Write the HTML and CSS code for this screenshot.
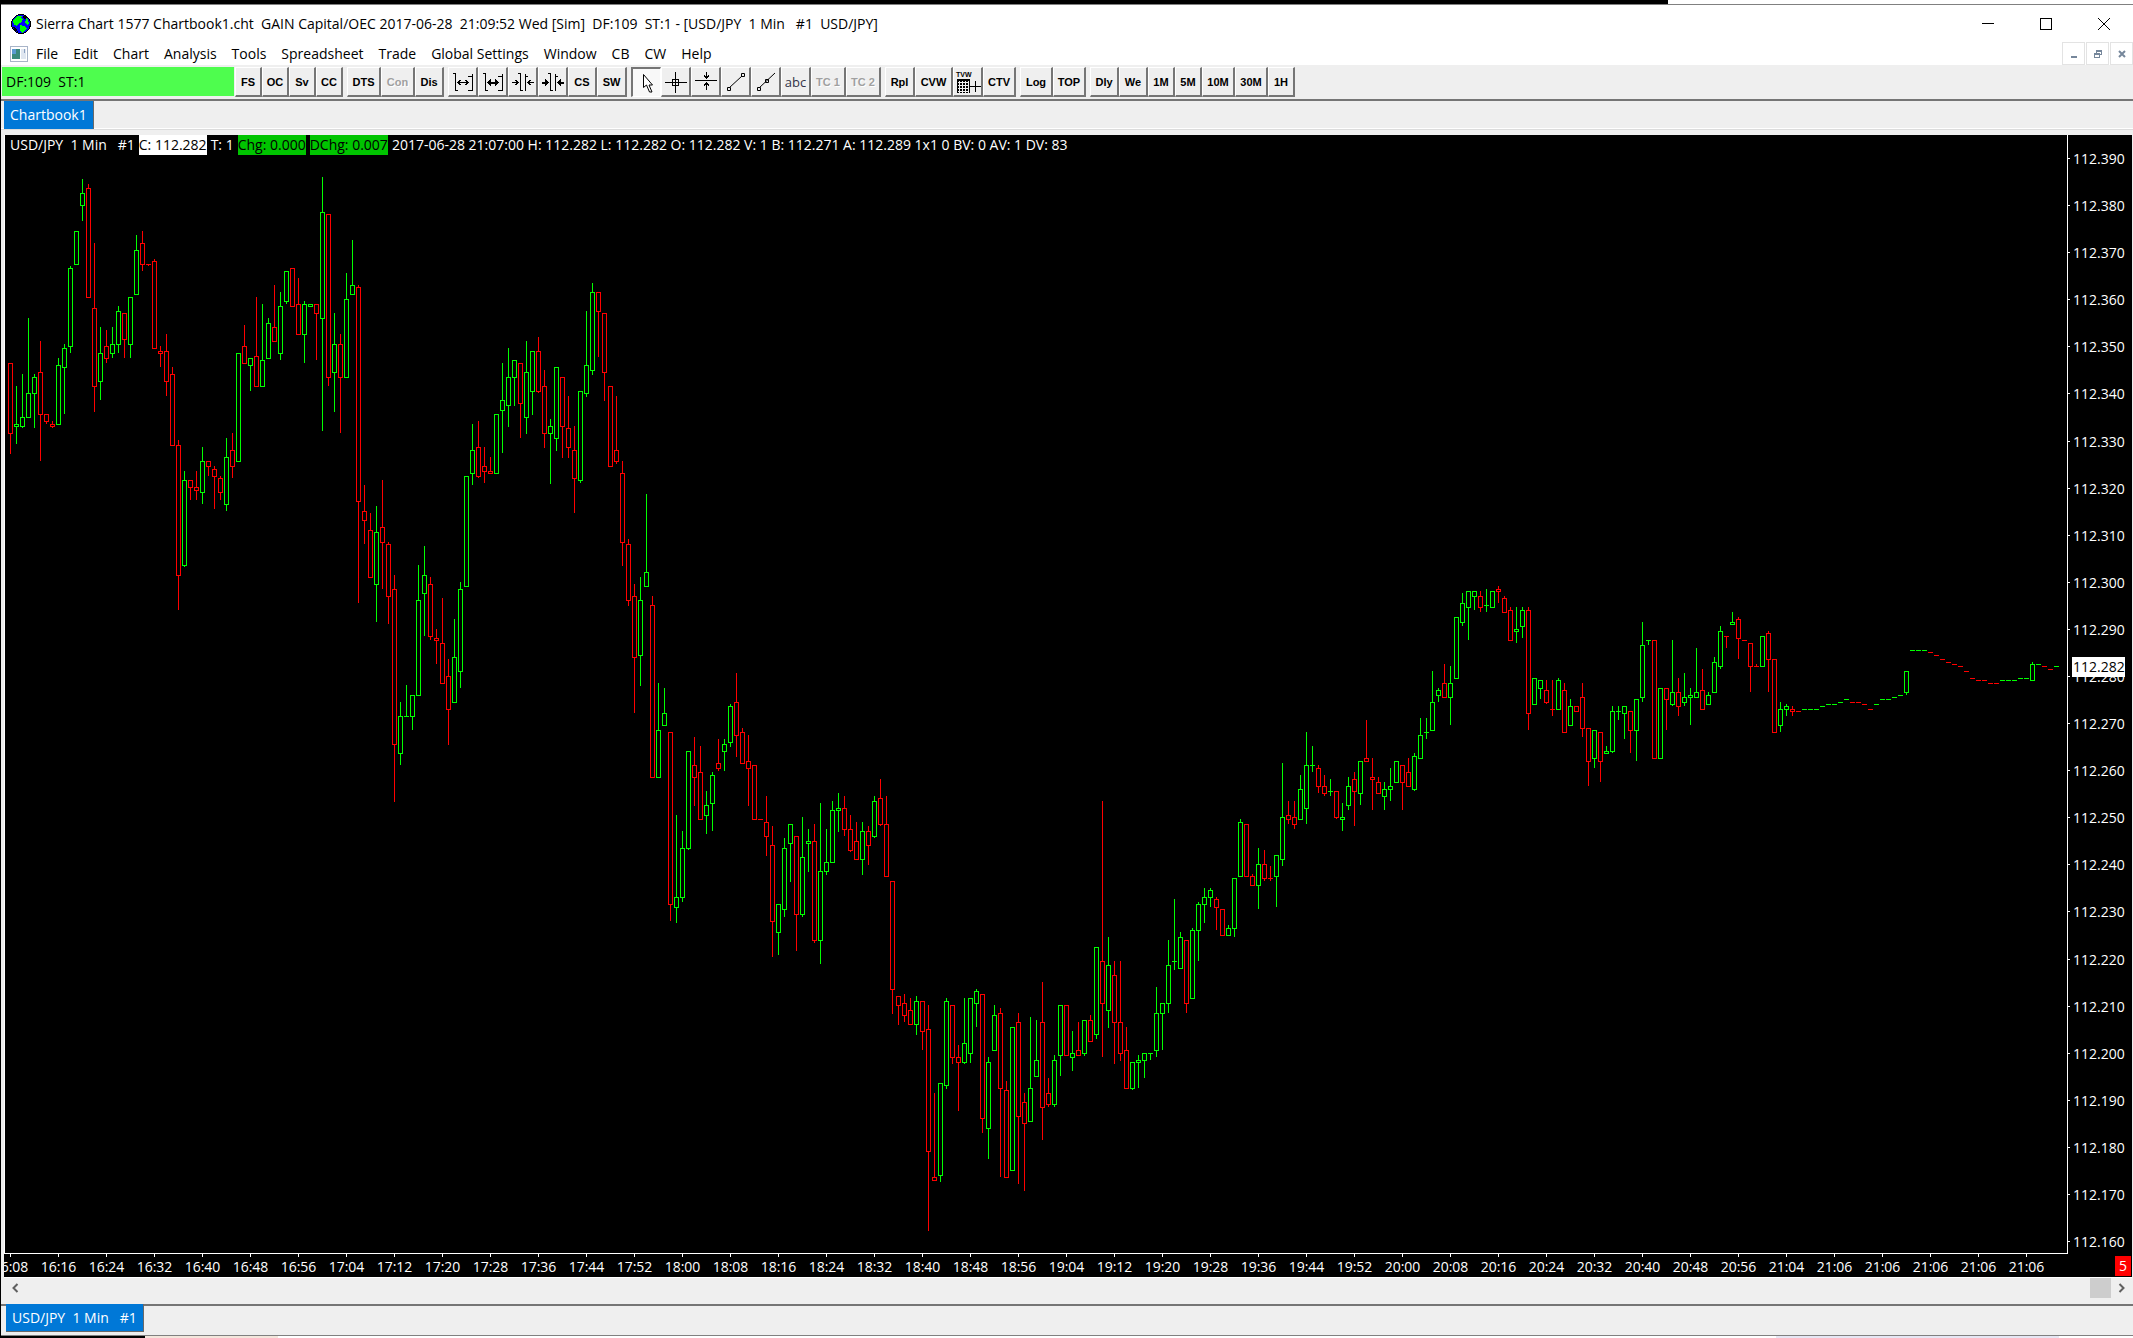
FILE: index.html
```html
<!DOCTYPE html>
<html lang="en">
<head>
    <meta charset="UTF-8">
    <meta name="viewport" content="width=device-width, initial-scale=1.0">
    <title>Sierra Chart 1577 Chartbook1.cht</title>
    <link rel="stylesheet" href="styles.css">
</head>
<body>

    <div class="desktop-top"></div>

    <div class="window">
        <!-- Title bar -->
        <header class="titlebar">
            <svg class="globe" viewBox="0 0 20 20">
                <circle cx="10" cy="10" r="9.5" fill="#00f" stroke="#000"/>
                <path fill="#0f0" d="M4 4l3-2h4l-1 2 2 1-1 3-3 1-2 3-3-1-1-4zM14 3l3 3 1 4-2 1-2-3 1-2zM9 11l4 1 3 2-2 3-3 2-2-3z"/>
                <path fill="#000" d="M2 13l3 1 2 4-3-1zM12 2h3l1 2-3 1z"/>
            </svg>
            <h1>Sierra Chart 1577 Chartbook1.cht&nbsp; GAIN Capital/OEC 2017-06-28&nbsp; 21:09:52 Wed [Sim]&nbsp; DF:109&nbsp; ST:1 - [USD/JPY&nbsp; 1 Min&nbsp;&nbsp; #1&nbsp; USD/JPY]</h1>
            <div class="window-buttons">
                <button type="button" aria-label="Minimize"><svg viewBox="0 0 12 12"><path d="M0 5.5h12"/></svg></button>
                <button type="button" aria-label="Maximize"><svg viewBox="0 0 12 12"><path d="M.5 .5h11v11h-11z"/></svg></button>
                <button type="button" aria-label="Close"><svg class="smooth" viewBox="0 0 12 12"><path d="M0 0l12 12M12 0L0 12"/></svg></button>
            </div>
        </header>

        <!-- Menu -->
        <nav class="menubar">
            <svg class="doc-icon" viewBox="0 0 18 16">
                <path fill="#fff" stroke="#a8b4c8" d="M.5 .5h17v15h-17z"/>
                <path fill="#3a8a7c" d="M2 3h8v10H2z"/>
                <path fill="#5b9bd0" d="M2 3h4v5H2z"/>
                <path fill="#dfe6f0" d="M11 3h5v10h-5z"/>
                <path fill="#8aa0c0" d="M14 3h1v4h-1z"/>
            </svg>
            <button type="button">File</button>
            <button type="button">Edit</button>
            <button type="button">Chart</button>
            <button type="button">Analysis</button>
            <button type="button">Tools</button>
            <button type="button">Spreadsheet</button>
            <button type="button">Trade</button>
            <button type="button">Global Settings</button>
            <button type="button">Window</button>
            <button type="button">CB</button>
            <button type="button">CW</button>
            <button type="button">Help</button>
            <div class="mdi-buttons">
                <button type="button" aria-label="Minimize chart"><svg viewBox="0 0 10 10"><path d="M2 8h6"/></svg></button>
                <button type="button" aria-label="Restore chart"><svg class="thin" viewBox="0 0 10 10"><path d="M3.5 4V1.500h5v4H7M3 2h6M1.500 4.500h5v4h-5zM1 5h6"/></svg></button>
                <button type="button" aria-label="Close chart"><svg class="smooth" viewBox="0 0 10 10"><path d="M2 2l6 6M8 2l-6 6"/></svg></button>
            </div>
        </nav>

        <!-- Toolbar -->
        <div class="toolbar">
            <div class="status">DF:109&nbsp; ST:1</div>
            <div class="group">
                <button type="button">FS</button>
                <button type="button">OC</button>
                <button type="button">Sv</button>
                <button type="button">CC</button>
            </div>
            <div class="group">
                <button type="button" class="w34">DTS</button>
                <button type="button" class="w34" disabled>Con</button>
                <button type="button" class="w29">Dis</button>
            </div>
            <div class="group">
                <button type="button" class="w30" aria-label="Widen spacing"><svg viewBox="0 0 22 22"><path d="M1 2.500h2.500v17H6M20.500 20V3M16 5.500h4.500M16 19.500h4.500M6 11.500h10M8.500 9l-2.500 2.500 2.500 2.500M13.500 9l2.500 2.500-2.500 2.500"/></svg></button>
                <button type="button" class="w30" aria-label="Widen bars"><svg viewBox="0 0 22 22"><path d="M1 2.500h2.500v17H6M20.500 20V3M16 5.500h4.500M16 19.500h4.500"/><path class="bold" d="M6 11.500h10"/><path class="fill" d="M5 11.500l4-4v8zM17 11.500l-4-4v8z"/></svg></button>
                <button type="button" class="w30" aria-label="Narrow spacing"><svg viewBox="0 0 22 22"><path d="M8.500 2v17H11M13.500 20V3M6 2.500h2.500M13.500 5.500H16M0 11.500h6M3.500 9l2.500 2.500-2.500 2.500M16 11.500h6M18.500 9l-2.500 2.500 2.500 2.500"/></svg></button>
                <button type="button" class="w30" aria-label="Narrow bars"><svg viewBox="0 0 22 22"><path d="M8.500 2v17H11M13.500 20V3M6 2.500h2.500M13.500 5.500H16"/><path class="bold" d="M0 11.500h4M18 11.500h4"/><path class="fill" d="M7 11.500l-4-4v8zM15 11.500l4-4v8z"/></svg></button>
                <button type="button" class="w29">CS</button>
                <button type="button" class="w30">SW</button>
            </div>
            <div class="group">
                <button type="button" class="w30 pressed" aria-label="Pointer"><svg class="smooth" viewBox="0 0 22 22"><path fill="#fff" d="M7.500 2.500v13l3-2.500 3 7h2.500l-3-7h3.500z"/></svg></button>
                <button type="button" class="w30" aria-label="Crosshair"><svg viewBox="0 0 22 22"><path d="M0 11.500h22M10.500 1v21M7.500 8.500h6v6h-6z"/></svg></button>
                <button type="button" class="w30" aria-label="Horizontal line"><svg viewBox="0 0 22 22"><path d="M0 9.500h22M11.500 1v6M9 4.500l2.500 2.500 2.500-2.500M11.500 12v7M9 14.500l2.500-2.500 2.500 2.500"/></svg></button>
                <button type="button" class="w30" aria-label="Trend line"><svg class="smooth" viewBox="0 0 22 22"><path d="M4 17L17 5M2.500 16.500h3v3h-3zM16.500 2.500h3v3h-3z"/></svg></button>
                <button type="button" class="w30" aria-label="Ray"><svg class="smooth" viewBox="0 0 22 22"><path d="M4 17L20 2M2.500 16.500h3v3h-3zM10.500 8.500h3v3h-3z"/></svg></button>
                <button type="button" class="w30 text-tool">abc</button>
                <button type="button" class="w35" disabled>TC 1</button>
                <button type="button" class="w35" disabled>TC 2</button>
            </div>
            <div class="group">
                <button type="button" class="w30">Rpl</button>
                <button type="button" class="w38">CVW</button>
                <button type="button" class="w30" aria-label="Trade window"><svg class="wide" viewBox="0 0 26 24"><path class="fill" d="M2 9h13v14H2z"/><path class="grid" d="M3 12.500h11M3 15.500h11M3 18.500h11M3 21.500h11M4.500 11v12M7.500 11v12M10.500 11v12M13.500 11v12"/><path d="M15 16.500h11M20.500 11v11"/><text x="1" y="7">TVW</text></svg></button>
                <button type="button" class="w33">CTV</button>
            </div>
            <div class="group">
                <button type="button" class="w33">Log</button>
                <button type="button" class="w33">TOP</button>
            </div>
            <div class="group">
                <button type="button" class="w29">Dly</button>
                <button type="button" class="w29">We</button>
                <button type="button">1M</button>
                <button type="button">5M</button>
                <button type="button" class="w33">10M</button>
                <button type="button" class="w33">30M</button>
                <button type="button">1H</button>
            </div>
        </div>

        <div class="book-tabs">
            <button type="button" class="tab">Chartbook1</button>
        </div>

        <!-- Chart -->
        <main class="chart">
            <div class="plot">
                <svg id="plot"></svg>
                <p class="readout">
                    <span>USD/JPY&nbsp; 1 Min&nbsp;&nbsp; #1</span>
                    <span class="last">C: 112.282</span>
                    <span>T: 1</span>
                    <span class="chg">Chg: 0.000</span>
                    <span class="chg">DChg: 0.007</span>
                    <span>2017-06-28 21:07:00 H: 112.282 L: 112.282 O: 112.282 V: 1 B: 112.271 A: 112.289 1x1 0 BV: 0 AV: 1 DV: 83</span>
                </p>
            </div>
            <svg id="prices"></svg>
            <svg id="times"></svg>
            <div class="corner"><span>5</span></div>
        </main>

        <div class="scrollbar">
            <button type="button" aria-label="Scroll left"><svg viewBox="0 0 8 10"><path d="M6.500 1l-4 4 4 4"/></svg></button>
            <div class="thumb"></div>
            <button type="button" aria-label="Scroll right"><svg viewBox="0 0 8 10"><path d="M1.500 1l4 4-4 4"/></svg></button>
        </div>

        <div class="chart-tabs">
            <button type="button" class="tab">USD/JPY&nbsp; 1 Min&nbsp;&nbsp; #1</button>
        </div>
    </div>

    <div class="desktop-bottom"><span class="cream"></span><span class="white"></span><span class="lilac"></span></div>

    <script src="chart.js"></script>
</body>
</html>
```
FILE: styles.css
```css
* {
    box-sizing: border-box;
}
body {
    margin: 0;
    height: 100vh;
    display: flex;
    flex-direction: column;
    background: #000;
    color: #000;
    font-family: "Open Sans", "Noto Sans", sans-serif;
    font-size: 14px;
    line-height: 20px;
    overflow: hidden;
}
button {
    font: inherit;
    color: inherit;
    border: none;
    background: none;
    padding: 0;
    white-space: nowrap;
}
svg {
    display: block;
    shape-rendering: crispEdges;
}
svg.smooth {
    shape-rendering: auto;
}
.desktop-top {
    height: 4px;
    flex: none;
    background: linear-gradient(to right, #000 78.2%, #fff 78.2%);
}
.window {
    flex: 1;
    min-height: 0;
    display: flex;
    flex-direction: column;
    margin-left: 1px;
    border-top: 1px solid #808080;
    border-bottom: 1px solid #808080;
    background: #efefef;
}

/* title bar */
.titlebar {
    display: flex;
    align-items: center;
    height: 37px;
    padding-left: 10px;
    background: #fff;
}
.globe {
    width: 20px;
    height: 20px;
}
.titlebar h1 {
    flex: 1;
    margin: 0 0 0 5px;
    font-size: 14px;
    font-weight: 400;
    white-space: nowrap;
}
.window-buttons {
    display: flex;
}
.window-buttons button {
    width: 58px;
    height: 36px;
    display: flex;
    align-items: center;
    justify-content: center;
}
.window-buttons svg {
    width: 12px;
    height: 12px;
    fill: none;
    stroke: #000;
}

/* menu */
.menubar {
    display: flex;
    align-items: center;
    gap: 15px;
    height: 23px;
    padding-left: 9px;
    background: #fff;
}
.doc-icon {
    width: 18px;
    height: 16px;
    margin-right: -7px;
}
.mdi-buttons {
    display: flex;
    gap: 1px;
    margin-left: auto;
}
.mdi-buttons button {
    width: 23px;
    height: 23px;
    display: flex;
    align-items: center;
    justify-content: center;
    border: 1px solid #e3e3e3;
}
.mdi-buttons svg {
    width: 10px;
    height: 10px;
    fill: none;
    stroke: #76879b;
    stroke-width: 2px;
}
.mdi-buttons .thin {
    stroke-width: 1px;
}

/* toolbar */
.toolbar {
    display: flex;
    gap: 4px;
    height: 34px;
    padding: 2px 0;
    padding-left: 1px;
}
.status {
    width: 232px;
    margin-right: -3px;
    padding: 5px 4px;
    background: #4efd4e;
    height: 29px;
}
.group {
    display: flex;
}
.group button {
    width: 27px;
    height: 30px;
    display: flex;
    align-items: center;
    justify-content: center;
    font: bold 11px "Liberation Sans", Arial, sans-serif;
    background: #efefef;
    border: 1px solid #fff;
    border-right: 2px solid #757575;
    border-bottom: 2px solid #757575;
}
.group .w29 {
    width: 29px;
}
.group .w30 {
    width: 30px;
}
.group .w33 {
    width: 33px;
}
.group .w34 {
    width: 34px;
}
.group .w35 {
    width: 35px;
}
.group .w38 {
    width: 38px;
}
.group button:disabled {
    color: #a0a0a0;
    text-shadow: 1px 1px #fff;
}
.group .text-tool {
    font: 13px "Open Sans", sans-serif;
    color: #333348;
}
.group .pressed {
    background: #f8f8f8;
    border: 1px solid #fff;
    border-top: 2px solid #757575;
    border-left: 2px solid #757575;
}
.group svg {
    width: 22px;
    height: 22px;
    fill: none;
    stroke: #000;
}
.group svg.wide {
    width: 26px;
    height: 24px;
}
.group .fill {
    fill: #000;
    stroke: none;
}
.group .bold {
    stroke-width: 2px;
}
.group .grid {
    stroke: #efefef;
}
.group text {
    fill: #000;
    stroke: none;
    font: bold 7px "Liberation Sans", sans-serif;
}

/* tabs */
.book-tabs {
    height: 36px;
    padding-left: 3px;
    border-top: 2px solid #757575;
    background: linear-gradient(#efefef 27px, #fff 27px, #fff 28px, #dcdcdc 28px, #dcdcdc 29px, #efefef 29px);
}
.tab {
    display: block;
    height: 28px;
    padding: 0 6px;
    background: #0078d7;
    color: #fff;
    border-right: 1px solid #696969;
}
.chart-tabs {
    height: 31px;
    padding-left: 5px;
    border-top: 2px solid #757575;
}
.chart-tabs .tab {
    margin-top: -2px;
    border-bottom: 1px solid #696969;
}

/* chart */
.chart {
    flex: 1;
    min-height: 0;
    display: grid;
    grid-template-columns: 1fr 64px;
    grid-template-rows: 1fr 23px;
    margin-left: 3px;
    margin-right: 1px;
    background: #000;
    color: #fff;
}
.plot {
    position: relative;
    min-height: 0;
    border: 1px solid #fff;
    border-top: none;
}
.chart svg {
    width: 100%;
    height: 100%;
    fill: #fff;
    stroke: none;
}
.plot svg {
    position: absolute;
    top: 0;
    left: 0;
}
.chart .axis {
    fill: none;
    stroke: #fff;
}
.chart .up {
    fill: none;
    stroke: #0f0;
}
.chart .down {
    fill: none;
    stroke: #f00;
}
.chart .tag {
    fill: #000;
}
#times text {
    text-anchor: middle;
}
.readout {
    position: absolute;
    top: 0;
    left: 0;
    display: flex;
    gap: 4px;
    margin: 0;
    padding-left: 5px;
    white-space: nowrap;
}
.readout .last {
    background: #fff;
    color: #000;
}
.readout .chg {
    background: #00c400;
    color: #000;
}
.corner {
    display: flex;
    justify-content: flex-end;
    padding: 2px 1px 1px;
}
.corner span {
    width: 16px;
    text-align: center;
    background: #f00;
}

/* scrollbar */
.scrollbar {
    display: flex;
    height: 27px;
    padding-bottom: 6px;
    margin-left: 3px;
    margin-right: 1px;
    border-top: 1px solid #fff;
}
.scrollbar button {
    width: 21px;
    display: flex;
    align-items: center;
    justify-content: center;
}
.scrollbar svg {
    width: 8px;
    height: 10px;
    fill: none;
    stroke: #606060;
    stroke-width: 2px;
    shape-rendering: auto;
}
.thumb {
    width: 21px;
    margin-left: auto;
    background: #cdcdcd;
}

.desktop-bottom {
    display: flex;
    height: 2px;
    flex: none;
    margin-left: 145px;
    padding-right: 74px;
    background: #fff;
}
.desktop-bottom .cream {
    width: 133px;
    background: #f3e6dc;
}
.desktop-bottom .white {
    flex: 1;
}
.desktop-bottom .lilac {
    width: 283px;
    background: #e6e6f3;
}
```
FILE: chart.js
```js
// One bar each: direction (U/D), then high, body top, body bottom, low
// measured down from the top of a plot BASE units tall.
const BASE = 1118;
const bars = `
D228,228,298,318 U251,289,291,308 U239,282,291,292 U183,258,282,282 U239,242,258,292 D206,237,279,325
D279,279,286,288 D286,289,291,292 U223,230,289,289 U209,213,232,278 U131,133,211,217 U96,96,129,129
U44,58,70,85 D49,53,162,162 D108,173,251,276 U192,218,246,264 D195,211,223,227 U192,209,218,222
U171,176,209,217 D178,178,204,222 U162,162,209,222 U100,115,159,159 D96,108,129,135 D129,129,129,130
D124,126,213,213 D211,216,218,231 D199,216,246,260 D232,239,310,310 D305,310,440,474 U336,345,430,431
D345,345,352,364 D336,352,355,364 U312,326,357,368 D326,326,331,340 D331,334,341,373 D341,343,357,364
U303,322,369,375 D298,315,331,342 U218,218,326,326 D190,211,228,228 U223,223,230,255 D162,221,251,251
U169,225,251,251 U183,188,223,223 D150,192,206,206 U157,171,218,224 U136,136,166,168 D133,133,171,171
D143,169,199,199 U166,169,199,227 U169,169,171,171 D169,169,178,224 U42,77,183,295 D79,79,242,250
U178,209,237,276 D199,209,242,297 U138,164,242,242 U105,150,159,159 D150,152,366,467 D350,376,385,408
D378,395,442,442 U371,397,449,486 D345,392,407,453 D407,409,461,488 D440,454,609,666 U567,581,618,629
U550,581,581,581 U560,560,581,594 U430,465,560,560 U411,440,458,500 D442,449,501,504 D494,503,505,528
D463,508,548,548 D524,541,574,609 U484,522,567,567 U447,454,536,552 U341,341,451,451 U289,315,338,349
D286,312,341,342 D312,331,336,347 D322,336,338,338 U279,279,338,338 U228,265,275,317 U213,242,270,291
U225,225,242,270 D228,228,268,302 U206,237,282,298 U216,216,256,279 D202,216,256,257 D235,251,298,312
U284,291,298,348 U232,232,303,315 D242,242,291,322 D261,293,312,322 D291,315,343,377 U256,256,345,347
U176,230,258,261 U148,157,235,239 D157,157,176,221 D178,178,237,265 D251,251,331,331 D261,315,326,328
D326,338,407,430 D404,409,465,470 D449,461,522,577 U442,465,520,550 U359,437,451,451 D461,470,642,642
U548,595,642,642 U553,578,590,590 D597,597,769,785 U680,762,772,787 U696,713,762,766 U616,616,713,714
D602,630,642,670 D611,637,684,684 U656,670,680,698 U637,640,668,695 D604,628,633,635 U604,609,616,635
U569,571,607,611 D538,567,600,621 D593,597,628,628 D600,626,633,670 D630,630,684,684 D684,684,684,684
D661,687,701,720 D691,710,786,821 U769,769,797,819 U703,713,774,781 U689,689,708,746 D701,701,779,815
U682,722,779,781 U694,706,708,736 D689,706,805,807 U668,736,805,828 U694,727,736,739 U666,675,727,727
U658,673,675,696 D661,673,694,700 D680,694,715,716 D687,706,724,724 U687,696,724,739 D691,696,710,729
U661,666,701,702 D644,663,689,690 D661,689,741,741 D746,746,854,878 D861,861,870,889 D859,868,880,886
D863,875,889,889 U861,866,889,899 D866,866,896,914 D870,894,1016,1095 D958,1042,1045,1045 U948,948,1040,1046
U863,866,950,953 D870,870,922,928 D910,922,927,975 U863,908,927,928 U863,863,918,927 U854,856,868,891
D859,859,983,997 U922,927,993,1023 U870,880,915,915 D873,878,953,1041 D946,955,1042,1042 U892,892,1035,1035
D878,887,981,1048 D958,967,988,1055 U882,953,986,986 U885,925,941,941 D847,887,972,1004 D943,958,969,971
U920,925,969,971 U870,870,920,940 D870,870,920,920 U896,918,922,935 D887,915,920,920 U885,885,918,920
D880,885,906,906 U812,812,899,903 D666,826,868,921 U802,830,875,892 D826,840,887,928 D826,887,918,925
D892,915,953,953 U927,927,953,954 U920,925,927,952 U918,918,925,942 U918,918,918,924 U852,878,915,921
U868,868,878,914 U805,830,868,877 U764,826,826,834 U797,802,833,833 D805,805,868,877 U793,795,863,863
U767,769,795,825 U753,762,769,787 U753,755,762,771 D762,764,772,794 D774,774,800,800 U790,793,800,800
U743,743,793,801 U684,687,741,741 D689,689,741,741 D739,741,750,750 U713,729,750,773 D715,729,743,745
D731,743,743,745 U720,720,741,771 U628,682,724,730 D666,680,684,688 D666,682,689,693 U640,654,684,684
U597,630,673,688 U611,630,630,636 D630,633,651,657 D640,651,658,660 U644,656,656,660 D656,656,682,683
U668,682,684,695 U642,651,670,674 D637,644,656,690 U626,626,658,669 D585,623,626,626 D623,642,644,674
D642,647,658,658 U647,654,661,674 U633,651,654,665 U626,626,647,647 D630,630,647,674 D623,637,651,651
U618,621,654,655 U583,600,623,623 U583,597,597,603 U536,567,595,595 U553,555,560,566 D529,548,562,562
U531,548,562,589 U482,482,543,543 U458,468,487,490 U456,456,472,504 U456,456,461,474 D456,461,472,476
U454,470,470,476 U456,456,472,472 D451,454,456,467 D461,463,477,477 D472,475,505,505 U472,494,496,507
U472,475,491,502 D472,475,578,594 U543,543,569,569 U545,545,553,563 D545,555,567,568 D545,574,574,580
U543,545,574,574 D548,555,597,597 U564,571,590,590 D571,571,576,576 D548,562,593,601 D593,593,626,650
U595,595,623,632 D597,597,626,646 U611,616,618,618 U571,576,616,617 U571,576,576,584 U571,571,578,603
D576,576,595,617 U564,564,595,625 U487,510,562,566 U505,505,505,509 D505,505,623,623 U553,553,623,623
D553,553,564,594 U505,557,569,570 D543,557,571,580 U538,562,567,570 U553,560,562,589 U513,557,562,562
D534,555,574,574 U557,560,569,569 U522,527,557,557 U491,496,531,533 D501,501,501,512 U477,487,489,489
D482,484,503,523 D505 D508,508,531,556 D529,531,531,531 U501,501,531,531 D496,498,524,556
D524,524,597,597 U567,574,590,596 U569,571,574,580 D571,574,576,580 D576 U574 U574 U574 U571 U569 U569
U567 U564 D567 D567 D569 D574 U569 U564 U564 U562 U560 U536,536,557,559 U515 U515 U515 D517 D520 D524
D527 D529 D531 D536 D543 D545 D545 D548 D548 U545 U545 U545 U543 U543 U527,529,545,545 U529 D531 D534 U531
`.trim().split(/\s+/);

const STEP = 6;        // distance between bars
const LABEL_EVERY = 8; // bars per time label

function draw() {
    const plot = document.getElementById('plot');
    const prices = document.getElementById('prices');
    const times = document.getElementById('times');
    const height = plot.getBoundingClientRect().height;
    const y = v => Math.round(v * height / BASE) + 0.5;

    // Candles
    const paths = { U: '', D: '' };
    bars.forEach((bar, i) => {
        const v = bar.slice(1).split(',').map(Number);
        const [high, top, bottom, low] = v.length > 1 ? v : [v[0], v[0], v[0], v[0]];
        const x = 5.5 + i * STEP;
        let d = '';
        if (top === bottom) {
            d += `M${x - 2.5} ${y(top)}h5`;
        } else {
            d += `M${x - 2} ${y(top)}h4V${y(bottom)}h-4z`;
        }
        if (high < top) d += `M${x} ${y(high) - 0.5}V${y(top)}`;
        if (low > bottom) d += `M${x} ${y(bottom)}V${y(low) + 0.5}`;
        paths[bar[0]] += d;
    });
    plot.innerHTML = `<path class="down" d="${paths.D}"/><path class="up" d="${paths.U}"/>`;

    // Price scale, 112.390 down to 112.160
    let scale = '';
    for (let i = 0; i <= 23; i++) {
        const py = y(23 + i * 47.09);
        scale += `<path class="axis" d="M0 ${py}h2"/><text x="5" y="${py + 5}">${(112.39 - i / 100).toFixed(3)}</text>`;
    }
    const last = y(531);
    scale += `<rect x="4" y="${last - 10}" width="53" height="20"/><text class="tag" x="5" y="${last + 5}">112.282</text>`;
    prices.innerHTML = scale;

    // Time scale, the last bars are all inside 21:06
    let labels = '';
    for (let i = 0; i * LABEL_EVERY < bars.length - 4; i++) {
        const min = Math.min(16 * 60 + 8 + i * 8, 21 * 60 + 6);
        const text = Math.floor(min / 60) + ':' + String(min % 60).padStart(2, '0');
        const x = 6.5 + i * LABEL_EVERY * STEP;
        labels += `<path class="axis" d="M${x} 0v3"/><text x="${x}" y="18">${text}</text>`;
    }
    times.innerHTML = labels;
}

draw();
window.addEventListener('resize', draw);
```
